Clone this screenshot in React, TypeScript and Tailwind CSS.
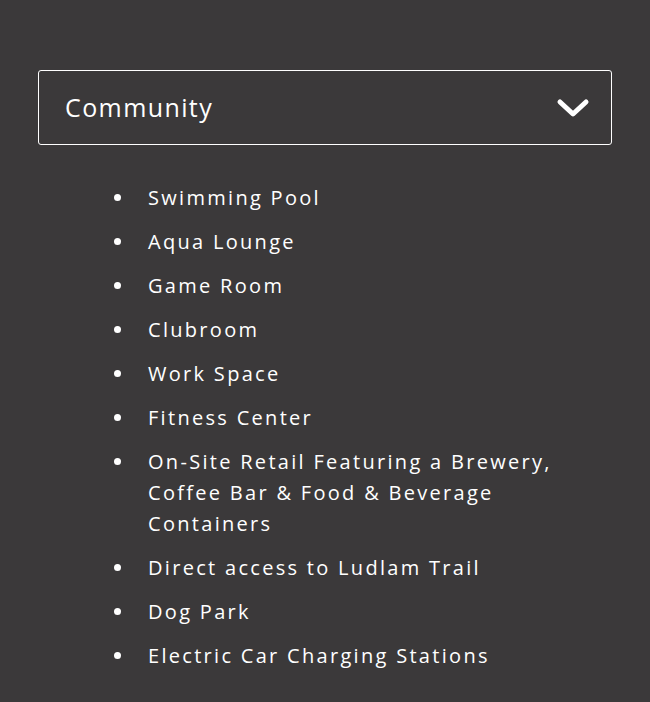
import React from "react";

const items = [
  "Swimming Pool",
  "Aqua Lounge",
  "Game Room",
  "Clubroom",
  "Work Space",
  "Fitness Center",
  "On-Site Retail Featuring a Brewery, Coffee Bar & Food & Beverage Containers",
  "Direct access to Ludlam Trail",
  "Dog Park",
  "Electric Car Charging Stations",
];

export default function App() {
  return (
    <div className="w-[650px] h-[702px] bg-[#3b393a] overflow-hidden pt-[70px] px-[38px] text-white" style={{ fontFamily: '"Open Sans", "Noto Sans", sans-serif' }}>
      <div className="w-[574px] h-[75px] border-[1.5px] border-white rounded-[3px] flex items-center justify-between pl-[26px] pr-[20px]">
        <span className="text-[25px] tracking-[1.4px] font-normal">Community</span>
        <svg width="34" height="22" viewBox="0 0 34 22" className="mr-[1px]">
          <path d="M4 5 L17 17 L30 5" fill="none" stroke="white" strokeWidth="5" strokeLinecap="round" strokeLinejoin="round" />
        </svg>
      </div>
      <ul className="mt-[37px] pl-[72px] pr-[40px]">
        {items.map((t) => (
          <li key={t} className="flex items-start mb-[13px] text-[20px] leading-[31px] tracking-[2.3px]">
            <span className="w-[38px] shrink-0 flex items-center h-[31px]">
              <span className="w-[7px] h-[7px] rounded-full bg-white ml-[4px]" />
            </span>
            <span className="max-w-[425px]">{t}</span>
          </li>
        ))}
      </ul>
    </div>
  );
}
